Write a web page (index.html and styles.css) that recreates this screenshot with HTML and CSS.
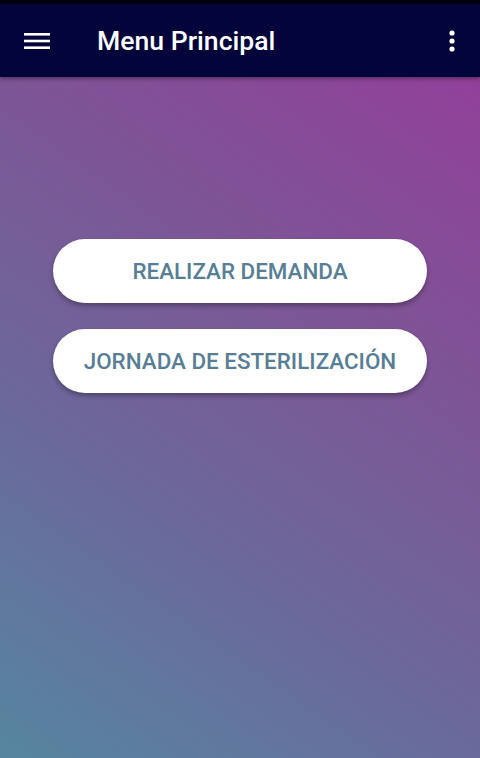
FILE: index.html
```html
<!DOCTYPE html>
<html lang="es">
<head>
  <meta charset="UTF-8">
  <meta name="viewport" content="width=device-width, initial-scale=1.0">
  <title>Menu Principal</title>
  <link rel="stylesheet" href="styles.css">
</head>
<body>
  <!-- barra superior -->
  <header class="toolbar">
    <button class="icon-btn menu-btn" aria-label="menu">
      <svg width="26" height="18" viewBox="0 0 26 18">
        <rect x="0" y="1" width="26" height="2.6" fill="#fff"/>
        <rect x="0" y="7.7" width="26" height="2.6" fill="#fff"/>
        <rect x="0" y="14.4" width="26" height="2.6" fill="#fff"/>
      </svg>
    </button>
    <h1 class="title">Menu Principal</h1>
    <button class="icon-btn more-btn" aria-label="más">
      <svg width="6" height="22" viewBox="0 0 6 22">
        <circle cx="3" cy="3" r="2.6" fill="#fff"/>
        <circle cx="3" cy="11" r="2.6" fill="#fff"/>
        <circle cx="3" cy="19" r="2.6" fill="#fff"/>
      </svg>
    </button>
  </header>

  <!-- contenido -->
  <main class="content">
    <button class="pill">REALIZAR DEMANDA</button>
    <button class="pill">JORNADA DE ESTERILIZACIÓN</button>
  </main>
</body>
</html>
```

FILE: styles.css
```css
* {
  margin: 0;
  padding: 0;
  box-sizing: border-box;
}

html, body {
  height: 100%;
}

body {
  font-family: Roboto, 'Noto Sans', Arial, sans-serif;
  display: flex;
  flex-direction: column;
  background: #03043a;
  overflow: hidden;
}

/* barra superior */
.toolbar {
  height: 77px;
  background: #03043a;
  border-top: 4px solid #010114;
  display: flex;
  align-items: center;
  padding: 0 18px 0 24px;
  box-shadow: 0 2px 4px rgba(0, 0, 0, 0.35);
  position: relative;
  z-index: 2;
}

.icon-btn {
  background: none;
  border: none;
  display: flex;
  align-items: center;
  justify-content: center;
}

.menu-btn {
  margin-top: 1px;
}

.title {
  color: #fff;
  font-size: 26.6px;
  font-weight: 500;
  margin-left: 47px;
  flex: 1;
}

.more-btn {
  width: 20px;
  margin-top: 1px;
}

/* contenido */
.content {
  flex: 1;
  display: flex;
  flex-direction: column;
  align-items: center;
  gap: 26px;
  padding-top: 162px;
  background: linear-gradient(35deg, #5686a0 0%, #6a6a9c 33%, #7d5596 67%, #92409a 100%);
}

.pill {
  width: 374px;
  height: 64px;
  border: none;
  border-radius: 32px;
  background: #fff;
  color: #587e95;
  font-family: Roboto, 'Noto Sans', Arial, sans-serif;
  font-size: 22.4px;
  font-weight: 500;
  box-shadow: 0 3px 5px rgba(0, 0, 0, 0.3);
}
```
